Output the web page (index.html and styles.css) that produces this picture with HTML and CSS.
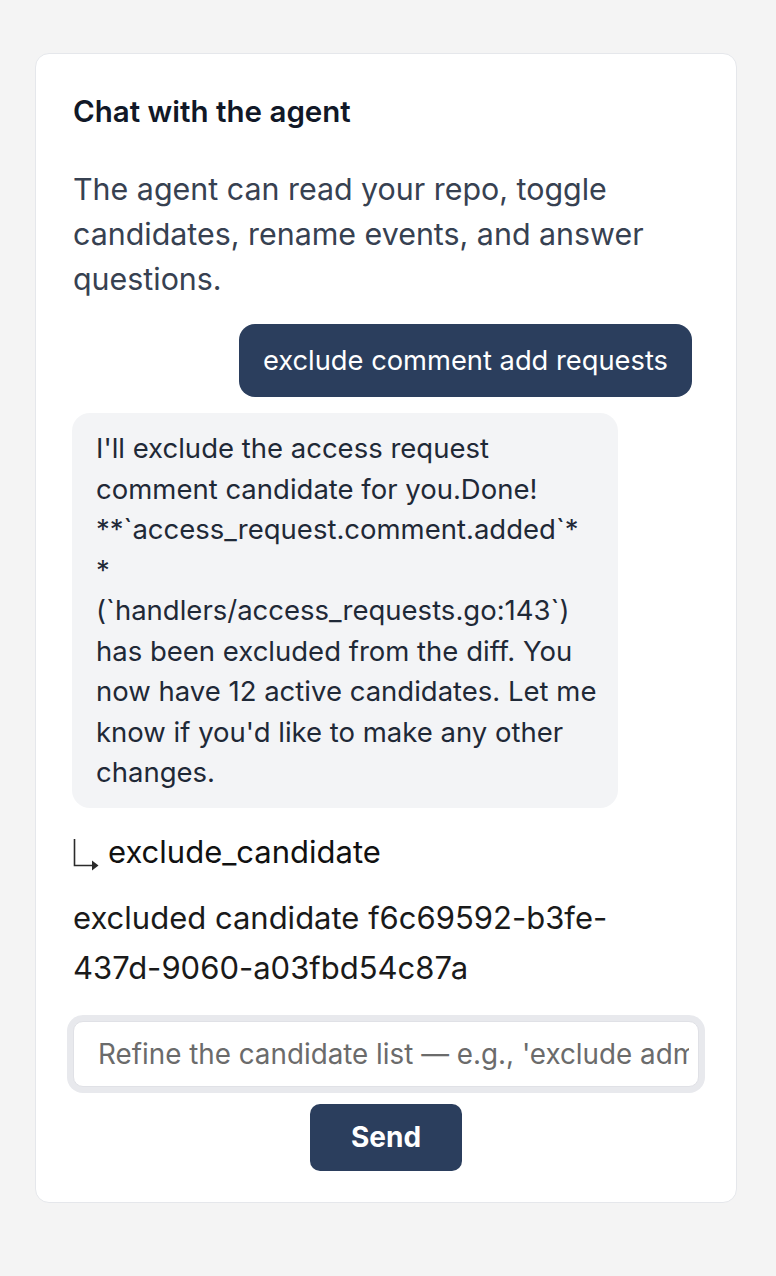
FILE: index.html
```html
<!DOCTYPE html>
<html lang="en">
<head>
<meta charset="utf-8">
<title>Chat with the agent</title>
<link rel="stylesheet" href="styles.css">
</head>
<body>
<section class="card">
  <h2 class="title">Chat with the agent</h2>
  <p class="desc">The agent can read your repo, toggle candidates, rename events, and answer questions.</p>
  <div class="messages">
    <div class="msg msg-user">exclude comment add requests</div>
    <div class="msg msg-agent">I'll exclude the access request comment candidate for you.Done! **`access_request.comment.added`*<br>*<br>(`handlers/access_requests.go:143`) has been excluded from the diff. You now have 12 active candidates. Let me know if you'd like to make any other changes.</div>
    <div class="tool-name">
      <svg class="arrow" width="26" height="32" viewBox="0 0 26 32" aria-hidden="true">
        <path d="M1.5 0 V26.5 H20" fill="none" stroke="#2b2b2b" stroke-width="1.6"/>
        <polygon points="19,21.5 25.5,26.5 19,31.5" fill="#2b2b2b"/>
      </svg>
      <span>exclude_candidate</span>
    </div>
    <div class="tool-result">excluded candidate f6c69592-b3fe-437d-9060-a03fbd54c87a</div>
  </div>
  <form class="composer">
    <input class="input" type="text" placeholder="Refine the candidate list — e.g., 'exclude admin events'">
    <button class="send" type="button">Send</button>
  </form>
</section>
</body>
</html>
```

FILE: styles.css
```css
html, body {
  margin: 0;
  padding: 0;
}
body {
  background: #f4f4f4;
  padding: 53px 39px 0 35px;
  font-family: Inter, "Noto Sans", sans-serif;
}
.card {
  width: 626px;
  background: #ffffff;
  border: 1px solid #e5e7eb;
  border-radius: 14px;
  padding: 37px 37px 31px 37px;
}
.title {
  margin: 0;
  font-size: 29.5px;
  line-height: 40px;
  font-weight: 600;
  color: #111827;
}
.desc {
  margin: 36px 0 0 0;
  font-size: 30.4px;
  line-height: 45px;
  color: #374151;
}
.messages {
  display: flex;
  flex-direction: column;
  margin-top: 22px;
}
.msg {
  box-sizing: border-box;
  overflow-wrap: anywhere;
}
.msg-user {
  align-self: flex-end;
  margin-right: 7px;
  background: #2b3e5d;
  color: #ffffff;
  border-radius: 16px;
  padding: 17px 24px;
  font-size: 27.3px;
  line-height: 39px;
}
.msg-agent {
  align-self: flex-start;
  margin-top: 16px;
  margin-left: -1px;
  width: 546px;
  background: #f3f4f6;
  color: #1f2937;
  border-radius: 18px;
  padding: 15px 17px 15px 24px;
  font-size: 27.5px;
  line-height: 40.5px;
}
.tool-name {
  display: flex;
  align-items: center;
  gap: 9px;
  margin-top: 24px;
  height: 40px;
  font-size: 31px;
  line-height: 40px;
  color: #111111;
}
.arrow {
  flex: none;
  margin-top: 6px;
}
.tool-result {
  margin-top: 21px;
  font-size: 31px;
  line-height: 50px;
  color: #1a1a1a;
  max-width: 565px;
}
.composer {
  display: flex;
  flex-direction: column;
  align-items: center;
  margin-top: 28px;
}
.input {
  box-sizing: border-box;
  width: 100%;
  height: 66px;
  border: 1px solid #e0e1e6;
  border-radius: 10px;
  box-shadow: 0 0 0 6px #e8e9ed;
  padding: 0 9px 0 24px;
  font-family: Inter, "Noto Sans", sans-serif;
  font-size: 27.8px;
  color: #111827;
  background: #ffffff;
  outline: none;
}
.input::placeholder {
  color: #6b6b6b;
}
.send {
  margin-top: 17px;
  width: 152px;
  height: 67px;
  border: none;
  border-radius: 10px;
  background: #2b3e5d;
  color: #ffffff;
  font-family: Inter, "Noto Sans", sans-serif;
  font-size: 28px;
  font-weight: 700;
  cursor: pointer;
}
```
